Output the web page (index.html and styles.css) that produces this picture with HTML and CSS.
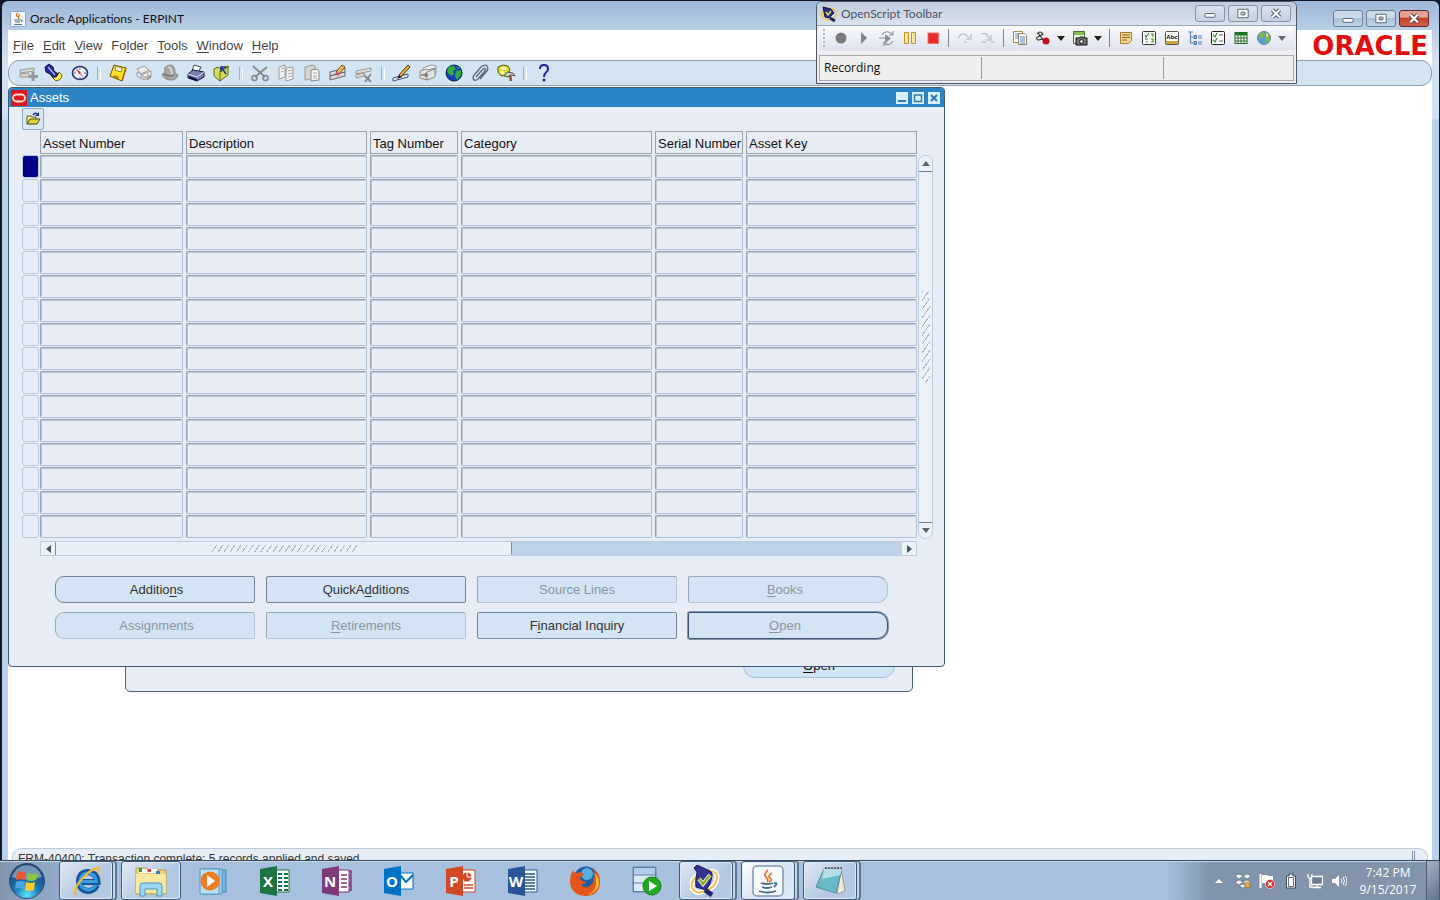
FILE: index.html
```html
<!DOCTYPE html>
<html lang="en">
<head>
<meta charset="utf-8">
<title>Oracle Applications - ERPINT</title>
<link rel="stylesheet" href="styles.css">
</head>
<body>
<main class="app">
  <header class="app-title">
    <svg class="i16" viewBox="0 0 16 16"><rect x=".5" y=".5" width="15" height="15" rx="1" fill="#f3f6fa" stroke="#8fa6c0"/><path d="M8 2q-3 2-.5 3.500T8 8M10 3.500q-2 1-1 3" fill="none" stroke="#e8701a" stroke-width="1.300"/><path d="M4 9h7M5 11h5M4 13.500h8M11 9q3 0 0 2" fill="none" stroke="#4d7594"/></svg>
    <h1>Oracle Applications - ERPINT</h1>
    <div class="win-controls">
      <button aria-label="Minimize"><svg viewBox="0 0 28 16"><rect x="8.500" y="8" width="11" height="4" rx="1" fill="#fff" stroke="#53606f"/></svg></button>
      <button aria-label="Restore"><svg viewBox="0 0 28 16"><path d="M8.500 3.500h11v9h-11zM12 6.500v3h4v-3z" fill="#fff" fill-rule="evenodd" stroke="#53606f"/></svg></button>
      <button class="red" aria-label="Close"><svg viewBox="0 0 28 16"><path d="M10 4l8 8M18 4l-8 8" stroke="#5b3a42" stroke-width="4.500"/><path d="M10 4l8 8M18 4l-8 8" stroke="#fff" stroke-width="2.400"/></svg></button>
    </div>
  </header>
  <div class="app-body">
    <div class="menu-row">
      <nav class="menu" aria-label="Main menu">
        <button><u>F</u>ile</button><button><u>E</u>dit</button><button><u>V</u>iew</button><button>Fo<u>l</u>der</button><button><u>T</u>ools</button><button><u>W</u>indow</button><button><u>H</u>elp</button>
      </nav>
      <div class="logo">ORACLE</div>
    </div>
    <div class="toolbar" role="toolbar" aria-label="Forms toolbar">
      <button aria-label="New"><svg viewBox="0 0 20 20"><path d="M2 7l14-2v3L2 10zM2 11l9-1v4H2z" fill="#d8d8d8" stroke="#999"/><path d="M15 9v9M11 13.500h9" stroke="#999" stroke-width="3"/></svg></button>
      <button aria-label="Find"><svg viewBox="0 0 20 20"><path d="M1 4l4-3 4 3 1 4 4 3-4 5-4-5-4-2z" fill="#24249a" stroke="#101048"/><path d="M4 4l7 8" stroke="#a8b4f0" stroke-width="1.500"/><path d="M9 15q5-1 6-6l3 3q0 5-6 6z" fill="#ffe94a" stroke="#756000"/><path d="M10 14q3-1 4-4" stroke="#181860" stroke-width="2" fill="none"/></svg></button>
      <button aria-label="Show Navigator"><svg viewBox="0 0 20 20"><ellipse cx="10" cy="10" rx="7.500" ry="6.500" fill="#eef3fb" stroke="#2d3670" stroke-width="1.700"/><path d="M6 5l3 6 2-1z" fill="#d01830"/><path d="M9 11l5 4-3-5z" fill="#e890a0"/><path d="M10 4.500v2M10 14v2M4 10h2M14 10h2" stroke="#667"/></svg></button>
      <span class="sep"></span>
      <button aria-label="Save"><svg viewBox="0 0 20 20"><path d="M6 2l12 3-4 13-12-5z" fill="#ffdf20" stroke="#6a5010"/><path d="M8 3l6 2-1 4-6-2z" fill="#fff" stroke="#a08520"/><path d="M6 12l5 2-1 3-5-2z" fill="#b07a10"/><path d="M14 18l4-13" stroke="#b06800" stroke-width="1.500"/></svg></button>
      <button aria-label="Next Step"><svg viewBox="0 0 20 20"><path d="M3 6l7-3 5 4-8 4zM3 9l4 2v5l-4-3zM9 11l8-3v6l-8 3z" fill="#ececec" stroke="#999"/><path d="M10 14h7M13 11l4 3-4 3" fill="none" stroke="#888"/></svg></button>
      <button aria-label="Switch Responsibility"><svg viewBox="0 0 20 20"><path d="M2 11q3-1 3-2-2-6 5-7 5 0 5 8l3 2q-1 5-8 5-7-1-8-6z" fill="#a5a5a5" stroke="#858585"/><path d="M8 4q4 1 4 8" fill="none" stroke="#d5d5d5" stroke-width="2"/><path d="M4 11q5 3 10 1" fill="none" stroke="#777" stroke-width="1.500"/></svg></button>
      <button aria-label="Print"><svg viewBox="0 0 20 20"><path d="M8 2l7 2-3 6-6-2z" fill="#fff" stroke="#445"/><path d="M2 11l5-4 11 2v5l-7 4-9-3z" fill="#777fae" stroke="#181840"/><path d="M2 11l9 3 7-5" fill="none" stroke="#d8dcf0"/><path d="M3 14l8 3" stroke="#111144" stroke-width="2"/></svg></button>
      <button aria-label="Close Form"><svg viewBox="0 0 20 20"><path d="M2 6l4-2 3 2 7-3v9l-8 6-6-5z" fill="#d5dc58" stroke="#5b641d"/><path d="M8 18V8l9-4" fill="none" stroke="#5b641d"/><path d="M14 11L10 5M9 9V4h5" stroke="#1530a0" stroke-width="1.500" fill="none"/></svg></button>
      <span class="sep"></span>
      <button aria-label="Cut"><svg viewBox="0 0 20 20"><path d="M3 3l12 11M17 4L5 14" stroke="#888" stroke-width="1.800"/><circle cx="4.500" cy="15" r="2.500" fill="none" stroke="#888" stroke-width="1.500"/><circle cx="15.500" cy="15" r="2.500" fill="none" stroke="#888" stroke-width="1.500"/></svg></button>
      <button aria-label="Copy"><svg viewBox="0 0 20 20"><path d="M3 4l6-2v12l-6 2zM10 5l7-1v12l-7 2z" fill="#f2f2f2" stroke="#999"/><path d="M5 6l3-1M5 9l3-1M12 8l4-1M12 11l4-1M12 14l4-1" stroke="#aaa"/></svg></button>
      <button aria-label="Paste"><svg viewBox="0 0 20 20"><path d="M3 4l8-2 2 1v12l-10 2z" fill="#d5d5d5" stroke="#999"/><path d="M9 7l6-1 2 2v9l-8 1z" fill="#f4f4f4" stroke="#888"/><path d="M11 10h4M11 13h4M11 15h4" stroke="#aaa"/></svg></button>
      <button aria-label="Clear Record"><svg viewBox="0 0 20 20"><path d="M2 9l15-4v8L2 17z" fill="#d9d9d9" stroke="#666"/><path d="M2 13l15-4" stroke="#555"/><path d="M8 9l6-7 3 2-6 7z" fill="#e9c34c" stroke="#704020"/><path d="M7 11l3 2 2-2-3-3z" fill="#d05080"/></svg></button>
      <button aria-label="Delete Record"><svg viewBox="0 0 20 20"><path d="M2 8l15-3v3L2 11zM2 12l8-2v3l-8 2z" fill="#ddd" stroke="#999"/><path d="M10 12l7 7M17 11l-6 8" stroke="#888" stroke-width="2"/></svg></button>
      <span class="sep"></span>
      <button aria-label="Edit Field"><svg viewBox="0 0 20 20"><path d="M1 15l15-4v3L1 18z" fill="#eef" stroke="#345080"/><path d="M7 12l9-10 2 2-9 10z" fill="#e7b238" stroke="#4a3010"/><path d="M5 16l2-4 3 2z" fill="#222"/></svg></button>
      <button aria-label="Zoom"><svg viewBox="0 0 20 20"><path d="M5 5l8-3 5 1v8l-9 3z" fill="#f4f4f4" stroke="#999"/><path d="M2 8l6-2 2 1 7-2v9l-8 3-7-2z" fill="#e4e4e4" stroke="#888"/><path d="M9 9v8M9 9l8-3" fill="none" stroke="#888"/><path d="M3 12h6l-2-2M9 12l-2 2" fill="none" stroke="#777" stroke-width="1.400"/></svg></button>
      <button aria-label="Translations"><svg viewBox="0 0 20 20"><circle cx="10" cy="10" r="8" fill="#143ebc" stroke="#0c2060"/><path d="M4 5q3-3 6-2l2 3-3 2 1 3-3 2-4-4zM12 8l5-1v5l-4 5-2-4zM12 3l4 2-2 1z" fill="#2fae3d"/></svg></button>
      <button aria-label="Attachments"><svg viewBox="0 0 20 20"><path d="M6 14l7-8q3-2 2 2l-7 8q-4 3-5-1 0-2 2-4l6-7q4-3 6-1 2 3-1 6l-6 7" fill="none" stroke="#5e666e" stroke-width="1.300"/></svg></button>
      <button aria-label="Folder Tools"><svg viewBox="0 0 20 20"><path d="M2 4l5-2 5 1 2 4-3 5-6 1-3-4z" fill="#dfdf3c" stroke="#555a15"/><path d="M5 5l5 1M5 9l3 1" stroke="#fff" stroke-width="2"/><path d="M8 13l3-4 6 1 2 3-4-1-3 2z" fill="#ccc" stroke="#555"/><path d="M14 12l1 6" stroke="#806020" stroke-width="2.500"/></svg></button>
      <span class="sep"></span>
      <button aria-label="Window Help"><svg viewBox="0 0 20 20"><path d="M6 6q0-4 4-4t4 4q0 2-2 3.500T10 14" fill="none" stroke="#20209a" stroke-width="2"/><circle cx="10" cy="17" r="1.500" fill="#20209a"/></svg></button>
    </div>
    <div class="mdi">
      <section class="back-window" aria-label="Find Assets"><button><u>O</u>pen</button></section>
      <section class="assets" aria-label="Assets">
        <header class="assets-title">
          <svg class="i16" viewBox="0 0 16 16"><rect width="16" height="16" fill="#e0141c"/><rect x="2" y="4.500" width="12" height="7" rx="3.500" fill="none" stroke="#ffe4dc" stroke-width="1.800"/></svg>
          <h2>Assets</h2>
          <div class="mini-controls">
            <button aria-label="Minimize"><svg viewBox="0 0 12 12"><path d="M2 9h8" stroke="#2b7db8" stroke-width="2"/></svg></button>
            <button aria-label="Maximize"><svg viewBox="0 0 12 12"><path d="M2.500 3h7v6.500h-7z" fill="none" stroke="#2b7db8" stroke-width="1.500"/></svg></button>
            <button aria-label="Close"><svg viewBox="0 0 12 12"><path d="M3 3l6 6M9 3l-6 6" stroke="#2b7db8" stroke-width="2"/></svg></button>
          </div>
        </header>
        <div class="assets-body">
          <button class="folder-btn" aria-label="Open folder"><svg class="i16" viewBox="0 0 16 16"><path d="M2 13V5h4l1 1h4v3" fill="#fff6a0" stroke="#5c5410"/><path d="M2 13l3-5h10l-3 5z" fill="#dcd33f" stroke="#4a4410"/><path d="M8 4q2-3 4-1" fill="none" stroke="#1a2f9c" stroke-width="1.400"/><path d="M14 1v4h-4z" fill="#1a2f9c"/></svg></button>
          <div class="grid-row">
            <table class="grid">
              <colgroup><col class="c-sel"><col class="c-num"><col class="c-desc"><col class="c-tag"><col class="c-cat"><col class="c-ser"><col class="c-key"></colgroup>
              <thead><tr><td></td><th><span>Asset Number</span></th><th><span>Description</span></th><th><span>Tag Number</span></th><th><span>Category</span></th><th><span>Serial Number</span></th><th><span>Asset Key</span></th></tr></thead>
              <tbody id="rows"></tbody>
            </table>
            <div class="vscroll">
              <button aria-label="Scroll up"><svg viewBox="0 0 8 5"><path d="M0 5l4-5 4 5z" fill="#59636d"/></svg></button>
              <div class="vthumb"><span class="hatch"></span></div>
              <button aria-label="Scroll down"><svg viewBox="0 0 8 5"><path d="M0 0l4 5 4-5z" fill="#59636d"/></svg></button>
            </div>
          </div>
          <div class="hscroll">
            <button aria-label="Scroll left"><svg viewBox="0 0 5 8"><path d="M5 0L0 4l5 4z" fill="#4b555f"/></svg></button>
            <div class="htrack"><div class="hthumb"><span class="hatch"></span></div></div>
            <button aria-label="Scroll right"><svg viewBox="0 0 5 8"><path d="M0 0l5 4-5 4z" fill="#4b555f"/></svg></button>
          </div>
          <div class="actions">
            <button class="round-l">Additio<u>n</u>s</button>
            <button>QuickA<u>d</u>ditions</button>
            <button disabled>Source Lines</button>
            <button class="round-r" disabled><u>B</u>ooks</button>
            <button class="round-l" disabled>Assignments</button>
            <button disabled><u>R</u>etirements</button>
            <button>F<u>i</u>nancial Inquiry</button>
            <button class="round-r default" disabled><u>O</u>pen</button>
          </div>
        </div>
      </section>
    </div>
    <footer class="status"><span>FRM-40400: Transaction complete: 5 records applied and saved.</span><i></i></footer>
  </div>
</main>

<section class="recorder" aria-label="OpenScript Toolbar">
  <header class="rec-title">
    <svg class="i16" viewBox="0 0 16 16"><ellipse cx="8" cy="8" rx="7" ry="6" fill="none" stroke="#f0c642" stroke-width="1.500"/><path d="M2 1l8 2 3 4-5 5-4-1z" fill="#2c2f86" stroke="#17174e"/><path d="M5 6l2 3 3-4" fill="none" stroke="#d4e04c" stroke-width="1.500"/><path d="M9 12l5 3" stroke="#20206a" stroke-width="3"/></svg>
    <h2>OpenScript Toolbar</h2>
    <div class="win-controls">
      <button aria-label="Minimize"><svg viewBox="0 0 28 16"><rect x="8.500" y="8" width="11" height="4" rx="1" fill="#fff" stroke="#53606f"/></svg></button>
      <button aria-label="Maximize"><svg viewBox="0 0 28 16"><path d="M8.500 3.500h11v9h-11zM12 6.500v3h4v-3z" fill="#fff" fill-rule="evenodd" stroke="#53606f"/></svg></button>
      <button aria-label="Close"><svg viewBox="0 0 28 16"><path d="M10 4l8 8M18 4l-8 8" stroke="#53606f" stroke-width="4.500"/><path d="M10 4l8 8M18 4l-8 8" stroke="#fff" stroke-width="2.200"/></svg></button>
    </div>
  </header>
  <div class="rec-tools" role="toolbar" aria-label="Recorder">
    <span class="grip"></span>
    <button aria-label="Record"><svg viewBox="0 0 16 16"><circle cx="8" cy="8" r="5.500" fill="#7b7b7b"/></svg></button>
    <button aria-label="Play"><svg viewBox="0 0 16 16"><path d="M5 2l6 6-6 6z" fill="#7f858c"/></svg></button>
    <button aria-label="Iterate"><svg viewBox="0 0 16 16"><path d="M6 4l6 4.500L6 13z" fill="#868d95"/><path d="M3 5q4-6 10-1M14 1v4h-4M14 11q-4 6-9 2M5 16v-4h3M0 8h6" fill="none" stroke="#8a929b" stroke-width="1.200"/></svg></button>
    <button aria-label="Pause"><svg viewBox="0 0 16 16"><path d="M2.500 2.500h4v11h-4zM9.500 2.500h4v11h-4z" fill="#fbe79a" stroke="#c29222"/></svg></button>
    <button aria-label="Stop"><svg viewBox="0 0 16 16"><rect x="3" y="3" width="10.500" height="10.500" fill="#e92b2b" stroke="#f07070"/></svg></button>
    <span class="rsep"></span>
    <button aria-label="Step over"><svg viewBox="0 0 16 16"><path d="M1 8q5-8 11 0M14 4v5H9M7 12h3" fill="none" stroke="#c3c7cd" stroke-width="1.600"/></svg></button>
    <button aria-label="Step into"><svg viewBox="0 0 16 16"><path d="M1 4q7-2 8 5M11 5v5H6M1 12h5M11 12h4" fill="none" stroke="#c3c7cd" stroke-width="1.600"/></svg></button>
    <span class="rsep"></span>
    <button aria-label="Script"><svg viewBox="0 0 16 16"><path d="M1.500 1.500h9v11h-9z" fill="#fff" stroke="#a08b58"/><path d="M6.500 3.500h6l2 2v9h-8z" fill="#f4f8ff" stroke="#8f8352"/><path d="M3 4h3M3 6h3M3 8h3M8 7h5M8 9h5M8 11h5M8 13h5" stroke="#5b86c4"/></svg></button>
    <button aria-label="Correlate"><svg viewBox="0 0 16 16"><path d="M2 4q3-4 6 0L3 7q-3 1 0 3l5-1M3 3l6 8" fill="none" stroke="#333" stroke-width="1.200"/><circle cx="11" cy="11" r="3.500" fill="#c0101c"/></svg></button>
    <button class="arrow" aria-label="Correlate options"><svg viewBox="0 0 8 5"><path d="M0 0h8L4 5z" fill="#222"/></svg></button>
    <button aria-label="Capture"><svg viewBox="0 0 16 16"><path d="M1.500 1.500h11v12h-11z" fill="#e7f2d9" stroke="#4a6d32"/><path d="M2 2h10v3H2z" fill="#86bf4c"/><path d="M4 8h3l1-1h3l1 1h3v7H4z" fill="#777" stroke="#111"/><circle cx="9.500" cy="11.500" r="2" fill="#eee" stroke="#111"/></svg></button>
    <button class="arrow" aria-label="Capture options"><svg viewBox="0 0 8 5"><path d="M0 0h8L4 5z" fill="#222"/></svg></button>
    <span class="rsep"></span>
    <button aria-label="Comment"><svg viewBox="0 0 16 16"><path d="M2.500 2.500h11v8l-3 3h-8z" fill="#f6d98f" stroke="#a87c2c"/><path d="M4 5h8M4 7.500h8M4 10h5" stroke="#8e6520"/></svg></button>
    <button aria-label="Tests"><svg viewBox="0 0 16 16"><rect x="1.500" y="1.500" width="13" height="13" rx="1" fill="#fff" stroke="#333"/><path d="M4 5l1 2 3-4M10 4h2v3M4 9h3M10 9h2v3h-2M5 12h2" fill="none" stroke="#3c8a2c" stroke-width="1.200"/></svg></button>
    <button aria-label="Text test"><svg viewBox="0 0 16 16"><rect x="1.500" y="1.500" width="13" height="13" rx="1" fill="#fff" stroke="#555"/><text x="8" y="9" class="abc">Abc</text><path d="M2 12.500h12" stroke="#d4a23a" stroke-width="3"/></svg></button>
    <button aria-label="Tree"><svg viewBox="0 0 16 16"><path d="M1 2h5M3.500 2v11.500M3.500 7h3M3.500 13h3M11 6h4M11 8h4M11 12h4M11 14h4" fill="none" stroke="#5f80b5" stroke-width="1.200"/><path d="M7 5.500h2.500v3H7zM7 11.500h2.500v3H7z" fill="#9bb6dd" stroke="#4f71a6"/></svg></button>
    <button aria-label="Checklist"><svg viewBox="0 0 16 16"><rect x="1.500" y="1.500" width="13" height="13" rx="1" fill="#fff" stroke="#222"/><path d="M3 5l2 2 2-4M3 10l2 2 2-4" fill="none" stroke="#3c9a2c" stroke-width="1.300"/><path d="M9 5h4M9 11h4" stroke="#567"/></svg></button>
    <button aria-label="Data table"><svg viewBox="0 0 16 16"><rect x="2" y="2.500" width="12" height="11" fill="#fff" stroke="#1c5c1c"/><path d="M2 4h12" stroke="#1e7a1e" stroke-width="3"/><path d="M5 4v10M8 4v10M11 4v10M2 8h12M2 11h12" stroke="#2e6e2e"/></svg></button>
    <button aria-label="Browser"><svg viewBox="0 0 16 16"><circle cx="8" cy="8" r="6.500" fill="#5c9ad8" stroke="#6483a4"/><path d="M4 3l4-1 1 3-4 4-3-2zM9 8l4-2 1 4-4 4z" fill="#7dba50"/><path d="M10 3l3 2-3 3z" fill="#f0dc62"/></svg></button>
    <button class="arrow" aria-label="Browser options"><svg viewBox="0 0 8 5"><path d="M0 0h8L4 5z" fill="#667"/></svg></button>
  </div>
  <div class="rec-status"><span>Recording</span><span></span><span></span></div>
</section>

<footer class="taskbar">
  <button class="start" aria-label="Start"><svg viewBox="0 0 38 38"><defs><radialGradient id="orb" cx=".5" cy=".9" r=".9"><stop offset="0" stop-color="#5ce4ff"/><stop offset=".4" stop-color="#1c78b4"/><stop offset="1" stop-color="#1c3c66"/></radialGradient></defs><circle cx="19" cy="19" r="17.500" fill="url(#orb)" stroke="#31517a"/><path d="M4 15Q8 3 19 3t15 12q-15 5-30 0" fill="#c8dcec" opacity=".5"/><path d="M9 10q5-2 9 1l-1 7q-4-2-9 0z" fill="#f1592a"/><path d="M20 11q5 2 10 0l-2 7q-5 2-9 0z" fill="#8cc63e"/><path d="M8 20q5-2 9 0l-1 7q-4-2-9 0z" fill="#4ba6e8"/><path d="M18 20q5 2 9 0l-1 8q-5 2-9 0z" fill="#ffc928"/></svg></button>
  <button class="task open stack" aria-label="Internet Explorer"><svg viewBox="0 0 32 32"><path d="M27 20q-3 6-9 6-9-1-9-10 1-9 9-9 9 1 9.500 10H10" fill="none" stroke="#14559c" stroke-width="6"/><path d="M26 20q-3 5-8 5-8-1-8-9 1-8 8-8 8 1 8.500 8.500H11" fill="none" stroke="#3a9be0" stroke-width="3"/><path d="M7 30Q-1 30 8 17 19 3 27 2q5 0 1 8 1-6-2-5Q18 7 10 18 4 27 7 30z" fill="#f4b93a"/></svg></button>
  <button class="task open" aria-label="File Explorer"><svg viewBox="0 0 32 32"><path d="M1 3h10l2 2h18v24H1z" fill="#ecd27a" stroke="#b99a48"/><path d="M4 4h8v4H4zM13 4h9v4h-9z" fill="#fff"/><path d="M4 3h3v4H4z" fill="#2e9c46"/><path d="M13 4h3v3h-3z" fill="#d0402c"/><path d="M21 6h4v3h-4z" fill="#3479c8"/><path d="M1 9h30v19H1z" fill="#f8e7a0"/><path d="M5 31v-10q0-3 3-3h16q3 0 3 3v10h-5v-7H10v7z" fill="#9bd6f2" stroke="#4998c8"/></svg></button>
  <button class="task" aria-label="Media Player"><svg viewBox="0 0 32 32"><path d="M9 5h20v22H9z" fill="#74b7de" stroke="#4686b4"/><path d="M6 4h19v25H6z" fill="#9dd0ec" stroke="#5794bd"/><path d="M3 4h19v25H3z" fill="#b9e1f6" stroke="#5794bd"/><circle cx="13" cy="16" r="9.500" fill="#ee7a22"/><path d="M10 10l8 6-8 6z" fill="#fff"/></svg></button>
  <button class="task" aria-label="Excel"><svg viewBox="0 0 32 32"><path d="M16 5h14v22H16z" fill="#fff" stroke="#1f7244"/><path d="M19 9h4M25 9h4M19 13h4M25 13h4M19 17h4M25 17h4M19 21h4M25 21h4M19 25h4M25 25h4" stroke="#1f7244" stroke-width="2"/><path d="M1 4l17-3v30L1 28z" fill="#1f7244"/><text x="9" y="22" class="off">X</text></svg></button>
  <button class="task" aria-label="OneNote"><svg viewBox="0 0 32 32"><path d="M16 5h12v22H16z" fill="#fff" stroke="#80397b"/><path d="M28 6h2v5h-2M28 13h2v5h-2M28 20h2v5h-2M20 10h6M20 14h6M20 18h6M20 22h6" fill="none" stroke="#80397b" stroke-width="1.500"/><path d="M1 4l17-3v30L1 28z" fill="#80397b"/><text x="9" y="22" class="off">N</text></svg></button>
  <button class="task" aria-label="Outlook"><svg viewBox="0 0 32 32"><path d="M16 8h14v16H16z" fill="#fff" stroke="#0072c6"/><path d="M17 10l6 7 7-7" fill="none" stroke="#0072c6" stroke-width="2"/><path d="M1 4l17-3v30L1 28z" fill="#0072c6"/><text x="9" y="22" class="off">O</text></svg></button>
  <button class="task" aria-label="PowerPoint"><svg viewBox="0 0 32 32"><path d="M16 5h14v22H16z" fill="#fff" stroke="#d24726"/><circle cx="22" cy="12" r="4.500" fill="#d24726"/><path d="M22 12V7M22 12h5" stroke="#fff"/><path d="M19 20h9M19 23h9" stroke="#d24726" stroke-width="1.500"/><path d="M1 4l17-3v30L1 28z" fill="#d24726"/><text x="9" y="22" class="off">P</text></svg></button>
  <button class="task" aria-label="Word"><svg viewBox="0 0 32 32"><path d="M16 5h14v22H16z" fill="#fff" stroke="#2a5699"/><path d="M18 9h10M18 12h10M18 15h10M18 18h10M18 21h10M18 24h10" stroke="#2a5699" stroke-width="1.300"/><path d="M1 4l17-3v30L1 28z" fill="#2a5699"/><text x="9" y="22" class="off">W</text></svg></button>
  <button class="task" aria-label="Firefox"><svg viewBox="0 0 32 32"><circle cx="17" cy="14" r="12.500" fill="#1f5f9f"/><circle cx="18" cy="9" r="6" fill="#5ab0dc"/><path d="M4 5q0 3 4 3 4-2 7 1l-4 4q0 3 3 3l3 1q-2 3-5 2 2 4 7 3 7-3 5-11 3 2 3 5 1-8-4-13 8 4 8 13 0 15-15 15Q2 30 1 17 1 10 4 5z" fill="#e4571c"/><path d="M24 7q7 5 6 13-3 8-11 10 9-5 8-14 0-5-3-9z" fill="#fbb52c"/></svg></button>
  <button class="task" aria-label="Server Manager"><svg viewBox="0 0 32 32"><path d="M2 2h23v25H2z" fill="#dbe8f5" stroke="#5d80a8"/><path d="M2 2h23v8H2z" fill="#b5cdea"/><path d="M2 10h23M2 18h23" stroke="#5d80a8"/><path d="M2.500 2.500h22v24h-22z" fill="none" stroke="#5d80a8"/><circle cx="21" cy="21" r="9" fill="#22a822" stroke="#128012"/><path d="M18 16l8 5-8 5z" fill="#fff"/></svg></button>
  <button class="task open stack" aria-label="OpenScript"><svg viewBox="0 0 32 32"><path d="M8 10q-8 6-6 13 4 7 13 3 12-4 12-15-1-5-7-5" fill="none" stroke="#fff" stroke-width="5"/><path d="M8 10q-8 6-6 13 4 7 13 3 12-4 12-15-1-5-7-5" fill="none" stroke="#f5bd52" stroke-width="2"/><path d="M4 3l3-3 13 6q3 1 2 5-1 9-6 14l-10-3Q5 15 7 7z" fill="#33348f" stroke="#1c1d5c"/><path d="M9 14l4 5 7-9" fill="none" stroke="#fff" stroke-width="4"/><path d="M9 14l4 5 7-9" fill="none" stroke="#92ae20" stroke-width="2.500"/><path d="M15 25l7 5" stroke="#25266e" stroke-width="5"/></svg></button>
  <button class="task open stack active" aria-label="Java"><svg viewBox="0 0 32 32"><rect x="1" y="1" width="30" height="30" rx="4" fill="#f7fafd" stroke="#7d98b5" stroke-width="1.500"/><path d="M16 5q-5 4-2 7t1 5M20 8q-5 3-2 5t-1 4" fill="none" stroke="#e8752c" stroke-width="1.800"/><path d="M9 18q6 2 12 0M10 22q5 2 10 0M7 26q9 3 17 0M22 18q5 0 0 4" fill="none" stroke="#476f91" stroke-width="1.800"/></svg></button>
  <button class="task open stack" aria-label="Notepad"><svg viewBox="0 0 32 32"><path d="M27 4l4 22-8 3z" fill="#f1eed8" stroke="#999"/><path d="M10 4h18l-6 24-20-6z" fill="#69b9c8" stroke="#4c8e9c"/><path d="M10 4h18l-2 6-18 4z" fill="#b4dfe6"/><path d="M11 3h17" stroke="#667" stroke-width="2" stroke-dasharray="2 1"/></svg></button>
  <div class="tray">
    <button aria-label="Show hidden icons"><svg viewBox="0 0 16 16"><path d="M4 10l4-4 4 4z" fill="#fff"/></svg></button>
    <button aria-label="Dropbox"><svg viewBox="0 0 16 16"><path d="M4 1l4 2-4 3-4-3zM12 1l4 2-4 3-4-3zM4 7l4 2-4 3-4-3zM12 7l4 2-4 3-4-3zM8 11l3 2-3 2-4-2z" fill="#fff" stroke="#56647a" stroke-width=".6"/><path d="M9 14q2-1 2-5h3q0 4 2 5z" fill="#f0b73c" stroke="#9a6d18" stroke-width=".6"/></svg></button>
    <button aria-label="Action Center"><svg viewBox="0 0 16 16"><path d="M1.500 1v14" stroke="#fff" stroke-width="2"/><path d="M3 2h5l1 1h5v7H3z" fill="#fff"/><circle cx="11" cy="11" r="4.500" fill="#d8242c" stroke="#fff" stroke-width=".6"/><path d="M9 9l4 4M13 9l-4 4" stroke="#fff" stroke-width="1.400"/></svg></button>
    <button aria-label="Battery"><svg viewBox="0 0 16 16"><path d="M6 1h4v2h2.500v12h-9V3H6z" fill="#fff" stroke="#3c4858"/><path d="M5.500 4.500h5v9h-5z" fill="#fff" stroke="#5c6b80"/></svg></button>
    <button aria-label="Network"><svg viewBox="0 0 16 16"><path d="M4.500 3.500h11v8h-11z" fill="#6b7c93" stroke="#fff" stroke-width="1.300"/><path d="M10 12v2M6 14.500h8M3 6v8h3M1 1v3l2 2 2-2V1" fill="none" stroke="#fff" stroke-width="1.300"/></svg></button>
    <button aria-label="Volume"><svg viewBox="0 0 16 16"><path d="M1 6h3l4-4v12l-4-4H1z" fill="#fff"/><path d="M10 6q2 2 0 4M12 4q3 4 0 8M14 3q4 5 0 10" fill="none" stroke="#fff"/></svg></button>
    <div class="clock"><time>7:42 PM</time><time>9/15/2017</time></div>
    <button class="peek" aria-label="Show desktop"></button>
  </div>
</footer>
<script src="app.js"></script>
</body>
</html>
```
FILE: styles.css
```css
* { box-sizing: border-box; }
body {
  margin: 0;
  height: 100vh;
  display: flex;
  flex-direction: column;
  overflow: hidden;
  background: #10182a;
  font: 13px/16px "Liberation Sans", Arial, sans-serif;
  color: #111;
}
button { font: inherit; color: inherit; border: 0; padding: 0; background: none; }
h1, h2 { margin: 0; font-weight: normal; }
svg { display: block; }
u { text-underline-offset: 2px; }
.i16 { width: 16px; height: 16px; }

.app {
  flex: 1;
  min-height: 0;
  display: flex;
  flex-direction: column;
  margin: 1px 1px 0 2px;
  padding: 0 7px 0 6px;
  border-radius: 6px 6px 0 0;
  background: linear-gradient(#9db8d8 0, #bacee6 29px, #d4e3f2 60px, #cfe0f2 118px, #b9d1ea 119px);
}
.app-title {
  display: flex;
  align-items: center;
  gap: 4px;
  height: 29px;
  padding: 6px 3px 0 2px;
}
.app-title h1, .rec-title h2 { font: 12px/16px Lato, "Open Sans", sans-serif; flex: 1; }
.win-controls { display: flex; gap: 3px; }
.win-controls button {
  width: 30px;
  height: 17px;
  border: 1px solid #6b7f99;
  border-radius: 3px;
  background: linear-gradient(#cbd9e9 45%, #a9bfd9 50%, #c3d5ea);
}
.win-controls svg { width: 28px; height: 15px; }
.win-controls .red { border-color: #5b2730; background: linear-gradient(#e3a194 40%, #c5402c 50%, #d4614a); }

.app-body { flex: 1; min-height: 0; display: flex; flex-direction: column; background: #fff; }
.menu-row { display: flex; align-items: center; justify-content: space-between; height: 30px; padding: 1px 4px 0 5px; }
.menu { display: flex; gap: 9px; color: #444; }
.logo { font: bold 26px/28px "DejaVu Sans", sans-serif; color: #e01010; }
.toolbar {
  display: flex;
  align-items: center;
  height: 26px;
  padding-left: 6px;
  border: 1px solid #8f9fae;
  border-radius: 11px;
  background: #d3e4f3;
}
.toolbar button { width: 26px; height: 24px; display: grid; place-items: center; }
.toolbar svg { width: 20px; height: 20px; }
.sep { width: 12px; height: 13px; display: flex; justify-content: center; }
.sep::before { content: ""; width: 2px; border-left: 1px solid #9fb0c0; border-right: 1px solid #fff; }

.mdi { position: relative; flex: 1; min-height: 0; }
.back-window {
  position: absolute;
  left: 117px;
  top: 400px;
  width: 788px;
  height: 206px;
  display: flex;
  align-items: flex-end;
  justify-content: flex-end;
  padding: 0 17px 13px;
  border: 1px solid #4e617b;
  border-radius: 5px;
  background: #e8edf5;
}
.back-window button { width: 152px; height: 25px; border: 1px solid #a9bfd6; border-radius: 12px; background: #d3e4f4; }
.assets {
  position: absolute;
  left: 0;
  top: 1px;
  width: 937px;
  border: 1px solid #43597b;
  border-radius: 4px;
  background: #e8edf5;
  overflow: hidden;
}
.assets-title { display: flex; align-items: center; gap: 3px; height: 19px; padding: 0 4px 0 2px; background: #2c84c5; color: #fff; }
.assets-title h2 { font-size: 13px; flex: 1; }
.mini-controls { display: flex; gap: 4px; }
.mini-controls button { width: 12px; height: 12px; background: #d6effb; }
.assets-body { padding: 1px 11px 27px 13px; }
.folder-btn {
  width: 22px;
  height: 22px;
  display: grid;
  place-items: center;
  border: 1px solid #8da8c2;
  border-radius: 2px;
  background: #d9e7f4;
}
.grid-row { display: flex; margin-top: 1px; }
.grid { width: 895px; table-layout: fixed; border-collapse: collapse; }
.grid td, .grid th { height: 24px; padding: 0 3px 1px 0; text-align: left; font-weight: normal; }
.grid td:first-child { padding-right: 1px; }
.grid td:last-child, .grid th:last-child { padding-right: 0; }
.grid th span {
  display: block;
  height: 23px;
  padding-left: 2px;
  border: 1px solid #9aa2ac;
  line-height: 23px;
  white-space: nowrap;
}
.c-sel { width: 18px; }
.c-num { width: 146px; }
.c-desc { width: 184px; }
.c-tag { width: 91px; }
.c-cat { width: 194px; }
.c-ser { width: 91px; }
.cell {
  display: block;
  width: 100%;
  height: 23px;
  padding: 0 3px;
  border: 1px solid #adc0d6;
  border-top-color: #98a3b1;
  border-left-color: #98a3b1;
  border-radius: 2px;
  background: #e8edf4;
  box-shadow: inset 1px 1px #bcc6d2;
  font: inherit;
  outline: 0;
}
.pick { display: block; width: 17px; height: 23px; border: 1px solid #b3c7de; border-radius: 3px; }
.pick.current { background: #00008b; }
.vscroll {
  display: flex;
  flex-direction: column;
  width: 15px;
  margin: 24px 0 0 1px;
  border: 1px solid #b9cbe0;
  border-radius: 7px;
  background: #edf1f8;
}
.vscroll button { height: 15px; display: grid; place-items: center; }
.vscroll svg { width: 8px; height: 5px; }
.vthumb { flex: 1; display: grid; place-items: center; padding-bottom: 20px; border: solid #6e7f92; border-width: 1px 0; }
.hatch { background: repeating-linear-gradient(125deg, #a9b6c6 0 1px, transparent 1px 5px); }
.vthumb .hatch { width: 8px; height: 92px; }
.hscroll { display: flex; height: 15px; margin: 2px 16px 0 18px; border: 1px solid #b9cbe0; background: #edf1f8; }
.hscroll button { width: 14px; display: grid; place-items: center; }
.hscroll svg { width: 5px; height: 8px; }
.htrack { flex: 1; background: #bfd1e7; }
.hthumb { width: 54%; height: 13px; display: grid; place-items: center; border: solid #7d8ea2; border-width: 0 1px; background: #eaf0f8; }
.hthumb .hatch { width: 148px; height: 7px; }
.actions { display: grid; grid-template-columns: repeat(4, 1fr); gap: 9px 11px; margin: 20px 45px 0 33px; }
.actions button {
  height: 27px;
  border: 1px solid #71859b;
  border-radius: 2px;
  background: #d3e4f4;
  color: #333;
}
.actions button:disabled { border-color: #98a8b8 #b0c5da #b0c5da #98a8b8; color: #8b949e; }
.actions .round-l { padding-left: 3px; border-radius: 9px 2px 2px 9px; }
.actions .round-r { padding-right: 6px; border-radius: 2px 11px 11px 2px; }
.actions .default:disabled { border-color: #3c5270; box-shadow: 0 0 0 1px #8497ad; }

.status {
  display: flex;
  height: 12px;
  margin: 0 4px;
  padding: 2px 12px 0 5px;
  border: 1px solid #b9cbdc;
  border-bottom: 0;
  border-radius: 9px 9px 0 0;
  background: #e8edf5;
  color: #333;
  font-size: 12px;
  justify-content: space-between;
  overflow: hidden;
}
.status i { width: 3px; height: 14px; border: solid #8190aa; border-width: 0 1px; }

.recorder {
  position: absolute;
  right: 143px;
  top: 1px;
  width: 481px;
  border: 1px solid #4e5561;
  border-radius: 6px 6px 0 0;
  background: #ececf1;
  padding: 0 2px 2px;
}
.rec-title {
  display: flex;
  align-items: center;
  gap: 4px;
  height: 24px;
  margin: 0 -2px;
  padding: 0 5px 0 4px;
  border-radius: 5px 5px 0 0;
  border-bottom: 1px solid #9ba5b4;
  background: linear-gradient(#c0ccda, #dbe4ee);
  color: #4a5563;
}
.rec-title .win-controls button { background: linear-gradient(#d9e2ec, #c6d2e0); border-color: #8694a7; }
.rec-tools { display: flex; align-items: center; height: 24px; background: linear-gradient(#fbfbfd, #dfe2ef); }
.rec-tools button { width: 23px; height: 22px; display: grid; place-items: center; }
.rec-tools svg { width: 16px; height: 16px; }
.rec-tools .arrow { width: 14px; }
.rec-tools .arrow svg { width: 8px; height: 5px; }
.grip { width: 2px; height: 18px; margin: 0 4px 0 4px; background: repeating-linear-gradient(#b5b9c2 0 2px, transparent 2px 4px); }
.rsep { width: 1px; height: 18px; margin: 0 4px; background: #7d8390; }
.abc { font: bold 6px "Liberation Sans", sans-serif; text-anchor: middle; }
.rec-status {
  display: grid;
  grid-template-columns: 162px 182px 1fr;
  height: 26px;
  margin-top: 5px;
  border: 1px solid #a5a8ae;
  background: #efefef;
  font: 12px/24px "Open Sans", "Noto Sans", sans-serif;
}
.rec-status span { padding-left: 4px; border-right: 1px solid #9b9b9b; margin: 1px 0; line-height: 22px; }
.rec-status span:last-child { border: 0; }

.taskbar {
  position: relative;
  display: flex;
  height: 40px;
  border-top: 1px solid #33485f;
  box-shadow: inset 0 1px #c9d9ea;
  background: linear-gradient(90deg, #8397b0 0, #8da4c2 40px, #a6c0dd 120px, #a6c0dd 81%, #8194ac 84%);
}
.start { width: 54px; margin-right: 5px; display: grid; place-items: center; }
.start svg { width: 38px; height: 38px; }
.task { width: 60px; height: 39px; margin-right: 2px; display: grid; place-items: center; border: 1px solid transparent; border-radius: 3px; }
.task svg { width: 32px; height: 32px; }
.task.open { border-color: #425a78; background: linear-gradient(135deg, #e0e9f3, #b3c8e0 60%, #b7cce4); box-shadow: inset 0 0 0 1px #dce8f4; }
.task.stack { width: 54px; margin-right: 8px; box-shadow: inset 0 0 0 1px #dce8f4, 3px 0 0 -1px #c5d6e9, 4px 0 0 #60758f; }
.task.active { background: linear-gradient(135deg, #fff, #d5e1ee 60%, #e3ecf5); }
.off { font: bold 15px "Open Sans", "Noto Sans", sans-serif; fill: #fff; text-anchor: middle; }
.tray { margin-left: auto; display: flex; align-items: center; color: #fff; }
.tray button { width: 24px; height: 39px; display: grid; place-items: center; }
.tray svg { width: 16px; height: 16px; }
.clock { display: grid; width: 74px; margin-right: 1px; text-align: center; font: 12px/17px "Open Sans", "Noto Sans", sans-serif; }
.tray .peek { width: 14px; border: 1px solid #4b5d73; border-width: 0 1px; background: linear-gradient(135deg, #a2b1c3, #62748b); }
```
FILE: app.js
```js
const fields = ["Asset Number", "Description", "Tag Number", "Category", "Serial Number", "Asset Key"];
const body = document.getElementById("rows");

for (let row = 1; row <= 16; row++) {
  const tr = body.insertRow();
  const pick = document.createElement("button");
  pick.className = row === 1 ? "pick current" : "pick";
  pick.setAttribute("aria-label", `Select record ${row}`);
  tr.insertCell().append(pick);
  for (const name of fields) {
    const input = document.createElement("input");
    input.className = "cell";
    input.setAttribute("aria-label", `${name}, record ${row}`);
    tr.insertCell().append(input);
  }
}
```
